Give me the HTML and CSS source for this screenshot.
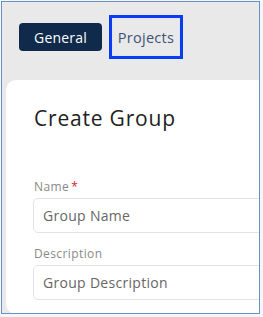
FILE: index.html
```html
<!DOCTYPE html>
<html lang="en">
<head>
  <meta charset="UTF-8" />
  <meta name="viewport" content="width=device-width, initial-scale=1.0"/>
  <title>Create Group</title>
  <link rel="stylesheet" href="styles.css">
</head>
<body>

  <div class="frame">
    <!-- TABS -->
    <div class="tabs">
      <button class="tab tab-active">General</button>
      <button class="tab tab-focus">Projects</button>
    </div>

    <!-- CARD -->
    <div class="card">
      <h1>Create Group</h1>

      <label class="field-label">Name<span class="req">*</span></label>
      <input type="text" class="field" placeholder="Group Name">

      <label class="field-label">Description</label>
      <input type="text" class="field" placeholder="Group Description">
    </div>
  </div>

</body>
</html>
```

FILE: styles.css
```css
body {
  margin: 0;
  font-family: 'Open Sans', sans-serif;
  background: #f4f6f9;
}
.frame {
  margin: 1px;
  width: 259px;
  height: 313px;
  border: 1px solid #6a90c8;
  background: #e9e9e9;
  overflow: hidden;
  padding: 0 0 0 4px;
  box-sizing: border-box;
}
.tabs {
  display: flex;
  align-items: center;
  gap: 7px;
  padding: 12px 0 0 13px;
  height: 46px;
}
.tab {
  font-family: inherit;
  font-size: 14px;
  border: none;
  background: none;
  padding: 0;
  cursor: pointer;
}
.tab-active {
  width: 83px;
  height: 28px;
  background: #0f2a4b;
  color: #fff;
  border-radius: 4px;
  letter-spacing: 0.2px;
}
.tab-focus {
  width: 74px;
  height: 44px;
  font-size: 14.5px;
  letter-spacing: 0.3px;
  color: #3b5378;
  border: 3px solid #0a3cf2;
  box-shadow: inset 0 0 0 1px #dfe6fb;
}
.card {
  margin-top: 20px;
  width: 320px;
  height: 234px;
  background: #fff;
  border-radius: 10px;
  padding: 24px 0 0 28px;
  box-sizing: border-box;
}
h1 {
  font-size: 21px;
  font-weight: 400;
  letter-spacing: 0.8px;
  color: #222;
  margin: 0 0 48px;
  line-height: 28px;
}
.field-label {
  display: block;
  font-size: 12px;
  letter-spacing: 0.4px;
  color: #8a8a8a;
  line-height: 14px;
  margin-bottom: 4px;
}
.req {
  color: #d0262b;
  margin-left: 2px;
}
.field {
  display: block;
  width: 260px;
  height: 35px;
  box-sizing: border-box;
  border: 1px solid #e3e3e3;
  border-radius: 5px;
  padding: 0 9px;
  font-family: inherit;
  font-size: 14px;
  letter-spacing: 0.3px;
  margin: 0 0 14px -1px;
}
.field::placeholder {
  color: #666;
}
```
